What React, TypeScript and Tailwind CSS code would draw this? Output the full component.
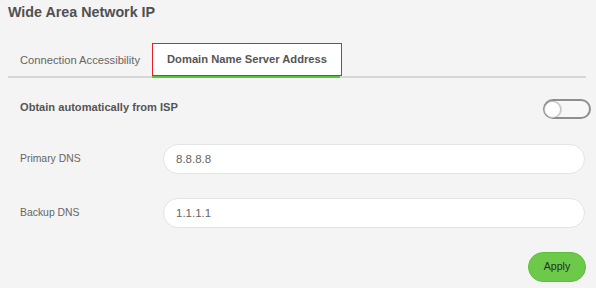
export default function App() {
  return (
    <div className="w-[596px] h-[288px] bg-[#f4f4f4] px-2 font-['Liberation_Sans',Arial,sans-serif] overflow-hidden">
      <h1 className="pt-[3px] text-[14.3px] leading-[18px] font-bold text-[#505050]">Wide Area Network IP</h1>

      {/* tabs */}
      <div className="mt-[22px] mr-[2px] flex items-end border-b-2 border-[#d6d6d6]">
        <button className="h-[32px] px-[12px] text-[11.2px] text-[#666]">Connection Accessibility</button>
        <div className="-mb-[2px] flex flex-col">
          <button className="h-[33px] px-[14px] bg-white border border-[#ee1c25] text-[11.2px] font-bold text-[#555]">
            Domain Name Server Address
          </button>
          <div className="h-[2px] bg-[#5cc43c] mr-[2px]"></div>
        </div>
      </div>

      {/* auto toggle */}
      <div className="mt-[18px] flex items-center pl-3">
        <span className="text-[11.1px] font-bold text-[#555]">Obtain automatically from ISP</span>
        <div className="ml-auto -mr-[3px] mt-[3px] w-[48px] h-[20px] rounded-full border-2 border-[#8e8e8e] bg-[#f7f7f7] flex items-center">
          <div className="w-[17px] h-[17px] rounded-full bg-white border border-[#bdbdbd] shadow-[1px_0_1px_rgba(0,0,0,0.15)] -ml-[1px]"></div>
        </div>
      </div>

      {/* dns inputs */}
      <div className="mt-[25px] flex items-center pl-3 pr-[3px]">
        <label className="w-[143px] text-[10.4px] text-[#666]">Primary DNS</label>
        <input
          defaultValue="8.8.8.8"
          className="flex-1 h-[30px] rounded-full bg-white border border-[#e4e4e4] px-3 text-[11.5px] text-[#666] outline-none"
        />
      </div>
      <div className="mt-[24px] flex items-center pl-3 pr-[3px]">
        <label className="w-[143px] text-[10.4px] text-[#666]">Backup DNS</label>
        <input
          defaultValue="1.1.1.1"
          className="flex-1 h-[30px] rounded-full bg-white border border-[#e4e4e4] px-3 text-[11.5px] text-[#666] outline-none"
        />
      </div>

      <div className="mt-[24px] flex justify-end pr-[2px]">
        <button className="w-[58px] h-[30px] rounded-full bg-[#6cc94a] border border-[#5cbf3a] text-[10.6px] text-[#2b2b2b]">
          Apply
        </button>
      </div>
    </div>
  );
}
